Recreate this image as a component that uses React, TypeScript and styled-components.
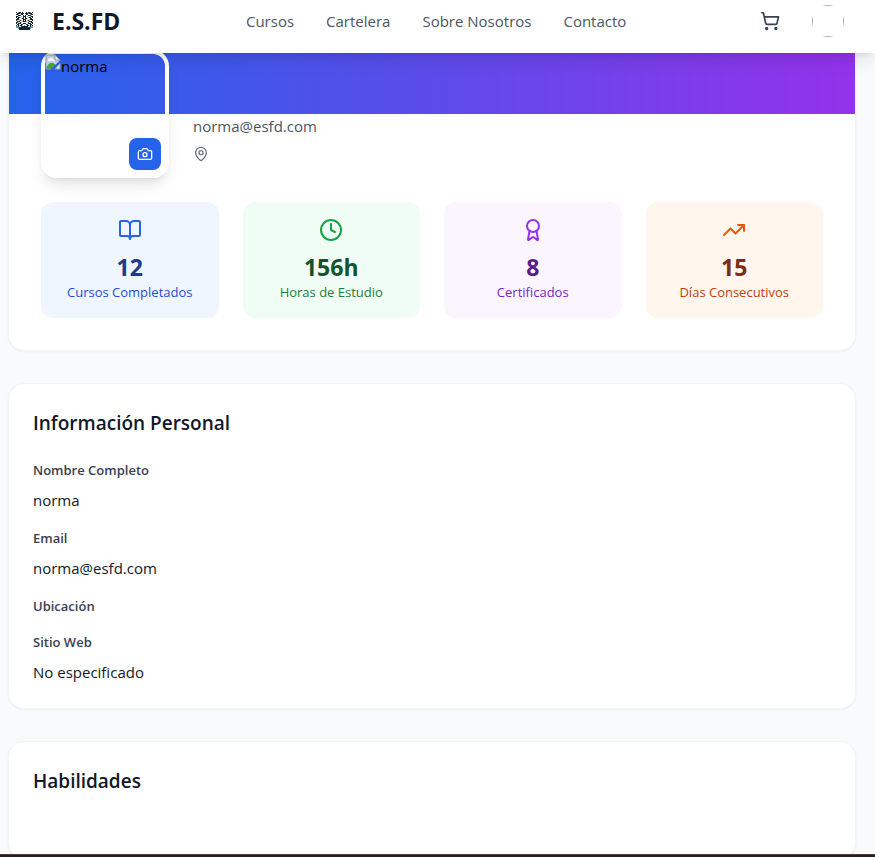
import React from "react";
import styled, { createGlobalStyle } from "styled-components";
import { Award, BookOpen, Camera, Clock, MapPin, ShoppingCart, TrendingUp } from "lucide-react";
import type { LucideIcon } from "lucide-react";

const GlobalStyle = createGlobalStyle`
  *, *::before, *::after { box-sizing: border-box; }
  html { scrollbar-width: none; }
  body {
    margin: 0;
    background: #f9fafb;
    color: #111827;
    font-family: "Open Sans", "Noto Sans", sans-serif;
    font-size: 15px;
    line-height: 24px;
  }
  h2, p, dl, dd, ul { margin: 0; padding: 0; }
`;

const Page = styled.div`
  min-height: 100vh;
  background: #f9fafb;
`;

const Header = styled.header`
  position: sticky;
  top: 0;
  z-index: 10;
  display: flex;
  align-items: center;
  justify-content: space-between;
  padding: 5px 31px 16px 16px;
  background: #ffffff;
  box-shadow: 0 10px 15px -3px rgba(0, 0, 0, 0.1), 0 4px 6px -4px rgba(0, 0, 0, 0.1);
`;

const Brand = styled.a`
  display: flex;
  align-items: center;
  gap: 19px;
  color: #111827;
  font-size: 23px;
  font-weight: 700;
  line-height: 32px;
  text-decoration: none;
`;

const Nav = styled.nav`
  display: flex;
  gap: 32px;
`;

const NavLink = styled.a`
  color: #4b5563;
  text-decoration: none;
`;

const Actions = styled.div`
  display: flex;
  align-items: center;
  gap: 24px;
`;

const CartButton = styled.button`
  display: flex;
  padding: 6px 8px;
  border: 0;
  background: none;
  color: #374151;
  cursor: pointer;
`;

const AccountButton = styled.button`
  width: 32px;
  height: 32px;
  padding: 0;
  overflow: hidden;
  border: 0;
  border-radius: 50%;
  background: none;
  cursor: pointer;
`;

const AccountImage = styled.span`
  display: block;
  height: 100%;
  border: 1px solid #b4b4b4;
`;

const Main = styled.main`
  display: flex;
  flex-direction: column;
  gap: 32px;
  margin-top: -68px;
  padding: 0 19px 0 8px;
`;

const Card = styled.section`
  overflow: hidden;
  border: 1px solid #f3f4f6;
  border-radius: 16px;
  background: #ffffff;
  box-shadow: 0 1px 2px rgba(0, 0, 0, 0.05);
`;

const Cover = styled.div`
  height: 128px;
  background: linear-gradient(to right, #2563eb, #9333ea);
`;

const ProfileBody = styled.div`
  padding: 0 32px 32px;
`;

const ProfileRow = styled.div`
  display: flex;
  align-items: flex-end;
  gap: 24px;
  margin-top: -64px;
  margin-bottom: 24px;
`;

const Avatar = styled.div`
  position: relative;
  display: flex;
  align-items: flex-start;
  width: 128px;
  height: 128px;
  border: 4px solid #ffffff;
  border-radius: 16px;
  color: #000000;
  box-shadow: 0 10px 15px -3px rgba(0, 0, 0, 0.1), 0 4px 6px -4px rgba(0, 0, 0, 0.1);
`;

const PhotoButton = styled.button`
  position: absolute;
  right: 4px;
  bottom: 4px;
  display: flex;
  padding: 8px;
  border: 0;
  border-radius: 8px;
  background: #2563eb;
  color: #ffffff;
  cursor: pointer;
`;

const Contact = styled.div`
  display: flex;
  flex-direction: column;
  gap: 8px;
  padding-bottom: 16px;
  color: #4b5563;
`;

const Place = styled.div`
  display: flex;
  color: #6b7280;
`;

const Stats = styled.ul`
  display: grid;
  grid-template-columns: repeat(4, 1fr);
  gap: 24px;
  list-style: none;
`;

type Tone = "blue" | "green" | "purple" | "orange";

const tones: Record<Tone, { back: string; icon: string; value: string; label: string }> = {
  blue: { back: "#eff6ff", icon: "#2563eb", value: "#1e3a8a", label: "#1d4ed8" },
  green: { back: "#f0fdf4", icon: "#16a34a", value: "#14532d", label: "#15803d" },
  purple: { back: "#faf5ff", icon: "#9333ea", value: "#581c87", label: "#7e22ce" },
  orange: { back: "#fff7ed", icon: "#ea580c", value: "#7c2d12", label: "#c2410c" },
};

const Stat = styled.li<{ $tone: Tone }>`
  display: flex;
  flex-direction: column;
  align-items: center;
  padding: 16px;
  border-radius: 12px;
  background: ${(p) => tones[p.$tone].back};
  color: ${(p) => tones[p.$tone].icon};
`;

const StatValue = styled.strong<{ $tone: Tone }>`
  margin-top: 10px;
  color: ${(p) => tones[p.$tone].value};
  font-size: 23px;
  font-weight: 700;
  line-height: 30px;
`;

const StatLabel = styled.span<{ $tone: Tone }>`
  color: ${(p) => tones[p.$tone].label};
  font-size: 13px;
  line-height: 20px;
  white-space: nowrap;
`;

const Panel = styled(Card)`
  padding: 24px;
`;

const PanelTitle = styled.h2`
  margin-bottom: 22px;
  font-size: 19px;
  font-weight: 600;
  line-height: 30px;
`;

const Fields = styled.dl`
  display: flex;
  flex-direction: column;
  gap: 16px;
`;

const Field = styled.div`
  display: flex;
  flex-direction: column;
  gap: 8px;
`;

const FieldName = styled.dt`
  color: #374151;
  font-size: 13px;
  font-weight: 600;
  line-height: 20px;
`;

const SkillList = styled.ul`
  min-height: 16px;
  list-style: none;
`;

const BottomBar = styled.footer`
  position: fixed;
  right: 0;
  bottom: 0;
  left: 0;
  z-index: 20;
  height: 3px;
  border-top: 1px solid #45403c;
  background: #2a1e17;
`;

/* k: ink, g: green, b: blue, l: pale ink */
const logoRows = [
  "k.lkk.k...k.kkl.k",
  ".kkklkkk.kkklkkk.",
  "kkl..kk...kk..lkk",
  "..kkk..k.k..kkk..",
  "kkg..l.kkk.l..gkk",
  "k.kkg..k.k..gkk.k",
  ".kk..gkk.kkg..kk.",
  "kkkg...kkk...gkkk",
  "k..gkl.k.k.lkg..k",
  ".kkk..gkkkg..kkk.",
  "kk..kg.....gk..kk",
  "k.kkk..kkk..kkk.k",
  ".kk..kk...kk..kk.",
  "k.klkk..l..kklk.k",
  "bbk..kkkkkkk..kbb",
  "lbbkkkkkkkkkkkbbl",
  "..lkkkkkkkkkkkl..",
  "...kkkkkkkkkkk...",
];
const logoInk: Record<string, string> = { k: "#172532", g: "#9cc59a", b: "#4aa3dc", l: "#8a97a3" };

const Logo = () => (
  <svg width="17" height="18" viewBox="0 0 17 18" shapeRendering="crispEdges" aria-hidden="true">
    {logoRows.flatMap((row, y) =>
      [...row].map((c, x) =>
        c === "." ? null : <rect key={`${x}-${y}`} x={x} y={y} width="1" height="1" fill={logoInk[c]} />
      )
    )}
  </svg>
);

const MissingImage = () => (
  <svg width="16" height="16" viewBox="0 0 16 16" aria-hidden="true">
    <path d="M1 1h9l5 5v3L8 15H1z" fill="#c6d9f5" />
    <path d="M3 6q0-2 2-2 2-1 3 1 2 0 2 2H3z" fill="#ffffff" />
    <path d="M1 14q3-6 7-5l3 2-4 4H1z" fill="#4da43a" />
    <path d="M10 1l5 5h-5z" fill="#ffffff" />
    <path d="M1 15V1h9l5 5v2M10 1v5h5M1 15h6" fill="none" stroke="#9a9fa6" />
    <path d="M15 9v6h-5z" fill="#e8eefa" stroke="#9a9fa6" />
    <path d="M6 16l10-9" stroke="#2f62e9" strokeWidth="2" />
  </svg>
);

const stats: { tone: Tone; icon: LucideIcon; value: string; label: string }[] = [
  { tone: "blue", icon: BookOpen, value: "12", label: "Cursos Completados" },
  { tone: "green", icon: Clock, value: "156h", label: "Horas de Estudio" },
  { tone: "purple", icon: Award, value: "8", label: "Certificados" },
  { tone: "orange", icon: TrendingUp, value: "15", label: "Días Consecutivos" },
];

const fields = [
  { name: "Nombre Completo", value: "norma" },
  { name: "Email", value: "norma@esfd.com" },
  { name: "Ubicación", value: "" },
  { name: "Sitio Web", value: "No especificado" },
];

export default function App() {
  return (
    <Page>
      <GlobalStyle />
      <Header>
        <Brand href="#">
          <Logo />
          E.S.FD
        </Brand>
        <Nav>
          {["Cursos", "Cartelera", "Sobre Nosotros", "Contacto"].map((item) => (
            <NavLink key={item} href="#">
              {item}
            </NavLink>
          ))}
        </Nav>
        <Actions>
          <CartButton aria-label="Carrito">
            <ShoppingCart size={20} />
          </CartButton>
          <AccountButton aria-label="Cuenta">
            <AccountImage />
          </AccountButton>
        </Actions>
      </Header>
      <Main>
        <Card>
          <Cover />
          <ProfileBody>
            <ProfileRow>
              <Avatar>
                <MissingImage />
                <span>norma</span>
                <PhotoButton aria-label="Cambiar foto">
                  <Camera size={16} />
                </PhotoButton>
              </Avatar>
              <Contact>
                <p>norma@esfd.com</p>
                <Place>
                  <MapPin size={16} />
                </Place>
              </Contact>
            </ProfileRow>
            <Stats>
              {stats.map(({ tone, icon: Icon, value, label }) => (
                <Stat key={label} $tone={tone}>
                  <Icon size={24} />
                  <StatValue $tone={tone}>{value}</StatValue>
                  <StatLabel $tone={tone}>{label}</StatLabel>
                </Stat>
              ))}
            </Stats>
          </ProfileBody>
        </Card>
        <Panel>
          <PanelTitle>Información Personal</PanelTitle>
          <Fields>
            {fields.map(({ name, value }) => (
              <Field key={name}>
                <FieldName>{name}</FieldName>
                {value && <dd>{value}</dd>}
              </Field>
            ))}
          </Fields>
        </Panel>
        <Panel>
          <PanelTitle>Habilidades</PanelTitle>
          <SkillList />
        </Panel>
      </Main>
      <BottomBar />
    </Page>
  );
}
